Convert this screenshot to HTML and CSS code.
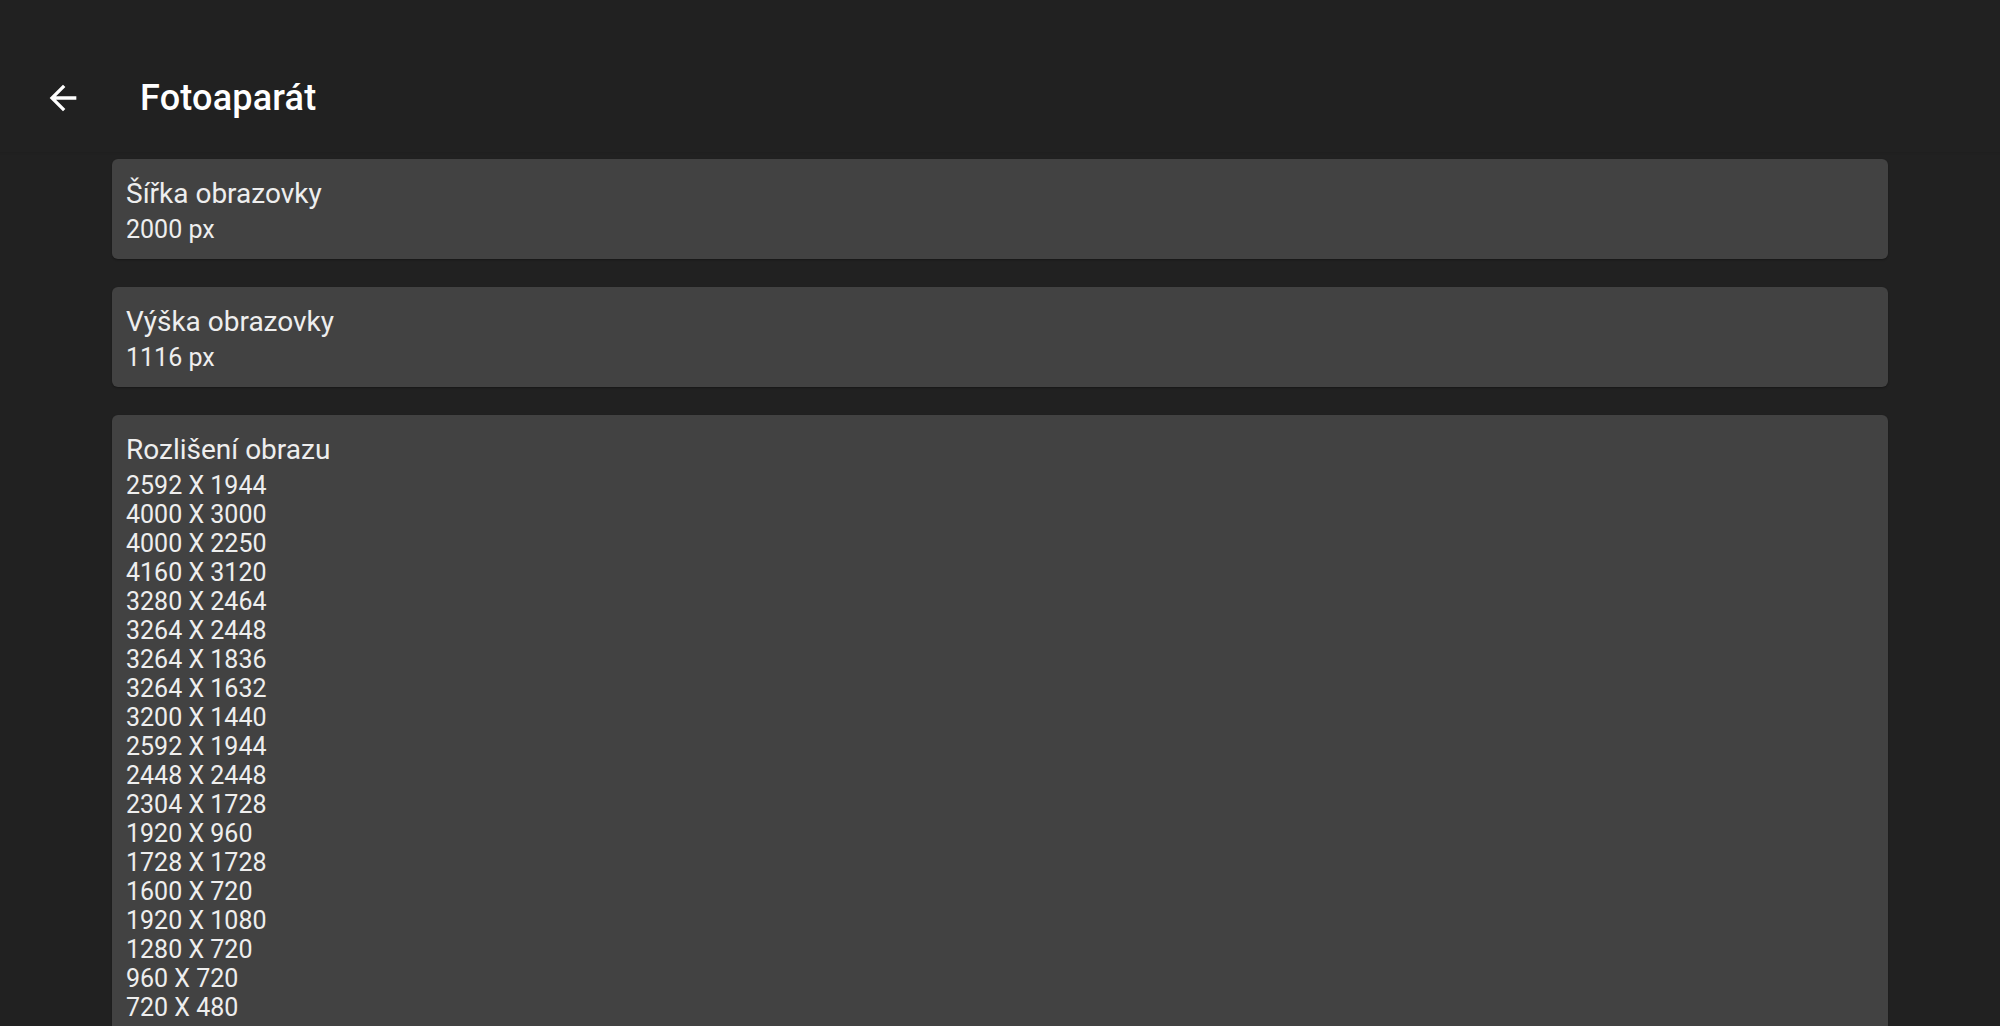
FILE: index.html
```html
<!DOCTYPE html>
<html>
<head>
    <title>Fotoaparát</title>
    <link rel="stylesheet" href="styles.css">
</head>
<body>
    <header class="toolbar">
        <button class="back-btn" aria-label="Zpět">
            <svg viewBox="0 0 24 24" width="40" height="40">
                <path d="M20 11H7.83l5.59-5.59L12 4l-8 8 8 8 1.41-1.41L7.83 13H20v-2z" fill="#ffffff"/>
            </svg>
        </button>
        <h1 class="title">Fotoaparát</h1>
    </header>

    <main class="content">
        <section class="card">
            <div class="card-title">Šířka obrazovky</div>
            <div class="card-value">2000 px</div>
        </section>

        <section class="card">
            <div class="card-title">Výška obrazovky</div>
            <div class="card-value">1116 px</div>
        </section>

        <section class="card">
            <div class="card-title">Rozlišení obrazu</div>
            <div class="card-value">
                <div>2592 X 1944</div>
                <div>4000 X 3000</div>
                <div>4000 X 2250</div>
                <div>4160 X 3120</div>
                <div>3280 X 2464</div>
                <div>3264 X 2448</div>
                <div>3264 X 1836</div>
                <div>3264 X 1632</div>
                <div>3200 X 1440</div>
                <div>2592 X 1944</div>
                <div>2448 X 2448</div>
                <div>2304 X 1728</div>
                <div>1920 X 960</div>
                <div>1728 X 1728</div>
                <div>1600 X 720</div>
                <div>1920 X 1080</div>
                <div>1280 X 720</div>
                <div>960 X 720</div>
                <div>720 X 480</div>
            </div>
        </section>
    </main>
</body>
</html>
```

FILE: styles.css
```css
* {
    box-sizing: border-box;
}

html, body {
    height: 100%;
}

body {
    margin: 0;
    overflow: hidden;
    background: #212121;
    color: #ffffff;
    font-family: Roboto, "Noto Sans", "Liberation Sans", sans-serif;
}

.toolbar {
    display: flex;
    align-items: center;
    height: 152px;
    padding-top: 44px;
    background: #212121;
    box-shadow: 0 1px 2px rgba(0, 0, 0, .08);
    position: relative;
}

.back-btn {
    display: flex;
    align-items: center;
    justify-content: center;
    width: 40px;
    height: 40px;
    margin-left: 43px;
    padding: 0;
    border: none;
    background: none;
    cursor: pointer;
}

.title {
    margin: 0 0 0 57px;
    font-size: 36px;
    font-weight: 500;
    letter-spacing: .2px;
    color: #ffffff;
}

.content {
    display: flex;
    flex-direction: column;
    gap: 28px;
    padding: 7px 112px 0;
}

.card {
    padding: 18px 14px 15px;
    background: #424242;
    border-radius: 6px;
    box-shadow: 0 1px 2px rgba(0, 0, 0, .3);
    color: #eeeeee;
}

.card-title {
    font-size: 28px;
    line-height: 33px;
}

.card-value {
    margin-top: 5px;
    font-size: 25px;
    line-height: 29px;
}
```
